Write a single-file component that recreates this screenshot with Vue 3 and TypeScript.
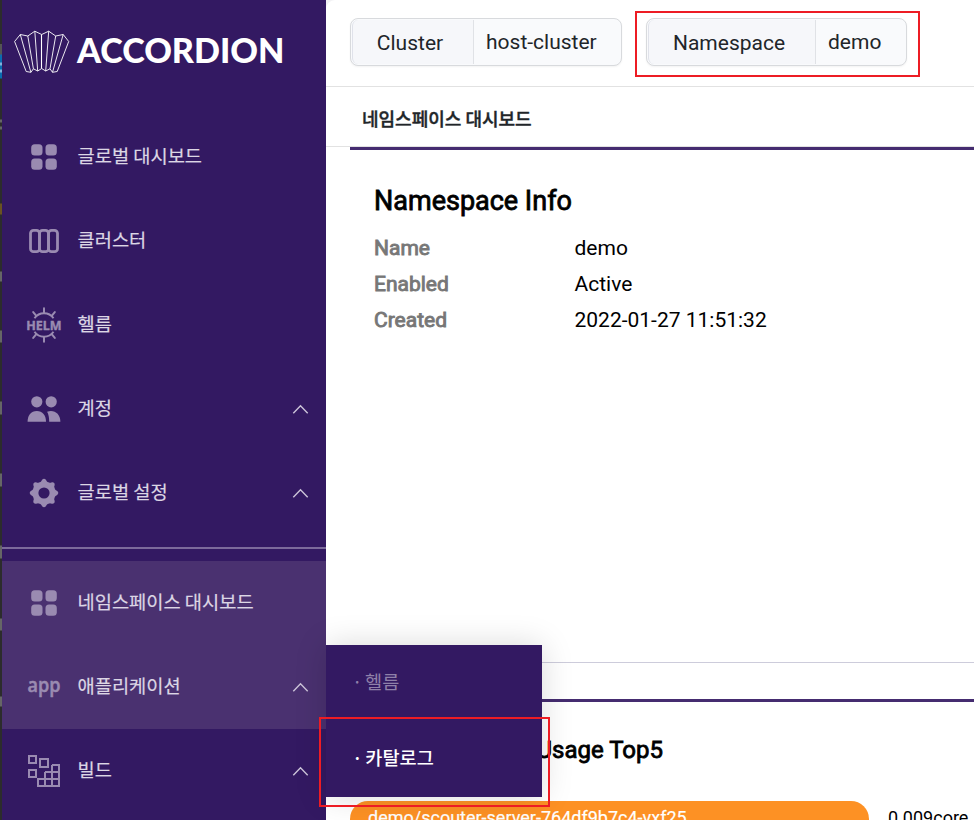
<script setup lang="ts">
interface MenuItem {
  icon: string
  label: string
  expandable?: boolean
  active?: boolean
}

const globalMenu: MenuItem[] = [
  { icon: 'grid', label: '글로벌 대시보드' },
  { icon: 'cluster', label: '클러스터' },
  { icon: 'helm', label: '헬름' },
  { icon: 'users', label: '계정', expandable: true },
  { icon: 'gear', label: '글로벌 설정', expandable: true },
]

const namespaceMenu: MenuItem[] = [
  { icon: 'grid', label: '네임스페이스 대시보드', active: true },
  { icon: 'app', label: '애플리케이션', expandable: true, active: true },
  { icon: 'build', label: '빌드', expandable: true },
]

const sections = [
  { name: 'menu-global', items: globalMenu },
  { name: 'menu-namespace', items: namespaceMenu },
]

const info = [
  { key: 'Name', value: 'demo' },
  { key: 'Enabled', value: 'Active' },
  { key: 'Created', value: '2022-01-27 11:51:32' },
]

const gearTeeth = [0, 45, 90, 135, 180, 225, 270, 315]
const helmSpokes = [0, 40, 140, 180, 220, 320]
</script>

<template>
  <div class="screen">
    <div class="edge"></div>
    <aside class="sidebar">
      <div class="brand">
        <svg class="brand-mark" width="56" height="44" viewBox="0 0 56 44">
          <g fill="none" stroke="#fff" stroke-width="0.9" stroke-linejoin="round">
            <path d="M.6 11.5 6.3 4.5 13.8 6 20.8 1.2 27.7 4.5 34.7 1.2 41.7 6 49.2 4.5 54.7 11.5 43.2 41.5 38.5 42.3 36 38.8 31.7 41 27.7 38.5 23.7 41 19.4 38.8 16.9 42.3 12.2 41.5Z" />
            <path d="M6.3 4.5 16.9 42.3M13.8 6 19.4 38.8M20.8 1.2 23.7 41M34.7 1.2 31.7 41M41.7 6 36 38.8M49.2 4.5 38.5 42.3" />
            <path d="M27.5 4.5V38.5" stroke-width="1.1" />
          </g>
        </svg>
        <svg class="brand-name" width="210" height="44" viewBox="0 0 210 44">
          <text x="0" y="31" textLength="207.5" lengthAdjust="spacingAndGlyphs">ACCORDION</text>
        </svg>
      </div>

      <nav v-for="section in sections" :key="section.name" :class="['menu', section.name]">
        <div v-for="item in section.items" :key="item.label" :class="['item', { active: item.active }]">
          <svg class="icon" width="36" height="36" viewBox="0 0 36 36">
            <g v-if="item.icon === 'grid'" fill="#9a8bb1">
              <rect x="5.2" y="5.2" width="11.3" height="11.3" rx="3.5" />
              <rect x="19.5" y="5.2" width="11.3" height="11.3" rx="3.5" />
              <rect x="5.2" y="19.5" width="11.3" height="11.3" rx="3.5" />
              <rect x="19.5" y="19.5" width="11.3" height="11.3" rx="3.5" />
            </g>
            <g v-else-if="item.icon === 'cluster'" fill="none" stroke="#9a8bb1" stroke-width="2.8">
              <rect x="4.5" y="7.3" width="9" height="21.4" rx="3" />
              <rect x="13.5" y="7.3" width="9" height="21.4" rx="3" />
              <rect x="22.5" y="7.3" width="9" height="21.4" rx="3" />
            </g>
            <g v-else-if="item.icon === 'helm'" fill="none" stroke="#9a8bb1" stroke-width="2">
              <path d="M8.5 11.3A11.5 11.5 0 0 1 27.5 11.3M8.5 24.7A11.5 11.5 0 0 0 27.5 24.7" />
              <path v-for="a in helmSpokes" :key="a" d="M18 6V1.2" stroke-linecap="round" :transform="`rotate(${a} 18 18)`" />
              <text x="0.2" y="22.7" textLength="35.4" lengthAdjust="spacingAndGlyphs" class="helm-text">HELM</text>
            </g>
            <g v-else-if="item.icon === 'users'" fill="#9a8bb1">
              <circle cx="10.8" cy="10.8" r="5.6" />
              <circle cx="25.2" cy="10.8" r="5.6" />
              <path d="M1.6 30.8C1.6 24.3 5 20 10.8 20S20 24.3 20 30.8Z" />
              <path d="M21.1 20.7C28 18.3 34.4 22.5 34.4 30.8H23.2C23.2 26.6 22.6 23.3 21.1 20.7Z" />
            </g>
            <g v-else-if="item.icon === 'gear'">
              <g fill="#9a8bb1">
                <circle cx="18" cy="18" r="11.6" />
                <path v-for="a in gearTeeth" :key="a" d="M13.8 7.5Q15.3 6.8 16.1 4.8Q18 2.6 19.9 4.8Q20.7 6.8 22.2 7.5Z" :transform="`rotate(${a} 18 18)`" />
              </g>
              <circle class="gear-hole" cx="18" cy="18" r="5.6" />
            </g>
            <text v-else-if="item.icon === 'app'" x="1.5" y="23" textLength="33" lengthAdjust="spacingAndGlyphs" class="app-text">app</text>
            <g v-else fill="none" stroke="#9a8bb1" stroke-width="2">
              <path d="M3 3H10V10H3ZM14 6H22V14H14ZM3 17H10V24H3Z" />
              <path d="M12 26H33V33H12ZM19 19H33M19 19V33M26 12H33V26M26 12V33" />
            </g>
          </svg>
          <span class="label">{{ item.label }}</span>
          <svg v-if="item.expandable" class="chevron" width="18" height="12" viewBox="0 0 18 12">
            <path d="M2.3 10.3 9.5 2.8 16.7 10.3" fill="none" stroke="#cbc3d8" stroke-width="1.4" />
          </svg>
        </div>
      </nav>
    </aside>

    <div class="backdrop">
      <main class="content">
        <header class="topbar">
          <div class="selector selector-cluster">
            <span class="selector-key">Cluster</span>
            <span class="selector-value">host-cluster</span>
          </div>
          <div class="selector selector-namespace">
            <span class="selector-key">Namespace</span>
            <span class="selector-value">demo</span>
          </div>
        </header>
        <h1 class="page-title">네임스페이스 대시보드</h1>
        <section class="card info-card">
          <h2>Namespace Info</h2>
          <dl>
            <div v-for="row in info" :key="row.key" class="info-row">
              <dt>{{ row.key }}</dt>
              <dd>{{ row.value }}</dd>
            </div>
          </dl>
        </section>
        <section class="card usage-card">
          <h3>Usage Top5</h3>
          <div class="usage-row">
            <div class="bar">demo/scouter-server-764df9b7c4-vxf25</div>
            <span>0.009core</span>
          </div>
        </section>
      </main>
    </div>

    <div class="submenu">
      <div class="subitem">· 헬름</div>
      <div class="subitem selected">· 카탈로그</div>
    </div>
    <div class="mark mark-namespace"></div>
    <div class="mark mark-catalog"></div>
  </div>
</template>

<style>
html,
body {
  margin: 0;
  overflow: hidden;
}
</style>

<style scoped>
* {
  box-sizing: border-box;
}
.screen {
  position: relative;
  display: flex;
  width: 974px;
  height: 820px;
  overflow: hidden;
  background: #fff;
  font-family: Roboto, "Noto Sans CJK KR", sans-serif;
}
.edge {
  flex: none;
  width: 2px;
  background: linear-gradient(#2c2c2c 44px, #555 44px 54px, #0a6bb0 55px 62px, #7fb2dc 63px 65px, #0a6bb0 66px 69px, #7fb2dc 70px 72px, #0a6bb0 73px 78px, #2c2c2c 79px 119px, #666 120px 122px, #2c2c2c 123px 126px, #666 127px 129px, #2c2c2c 130px 203px, #6a5321 204px 214px, #2c2c2c 215px 271px, #666 272px 281px, #2c2c2c 282px 330px, #666 331px 342px, #2c2c2c 343px 401px, #666 402px 414px, #2c2c2c 415px 473px, #666 474px 486px, #2c2c2c 487px 545px, #666 546px 558px, #2c2c2c 559px 618px, #666 619px 630px, #2c2c2c 631px 696px, #666 697px 706px, #2c2c2c 707px);
}
.sidebar {
  flex: none;
  width: 324px;
  background: #331962;
}
.brand {
  display: flex;
  height: 115px;
  padding: 30px 0 0 12px;
}
.brand-mark {
  flex: none;
}
.brand-name {
  flex: none;
  margin: 2px 0 0 7px;
  overflow: visible;
}
.brand-name text {
  font: 900 33.6px Lato, sans-serif;
  fill: #fff;
}
.menu-global {
  height: 434px;
  border-bottom: 2px solid #7c6a9b;
}
.menu-namespace {
  padding-top: 12px;
}
.item {
  display: flex;
  align-items: center;
  height: 84px;
  padding: 0 17px 0 24px;
}
.item.active {
  background: #4a3170;
}
.icon {
  flex: none;
  overflow: visible;
}
.label {
  flex: 1;
  margin: -4px 0 0 15.5px;
  color: #dcd6e4;
  font: 400 18.7px/28px "Noto Sans CJK KR", sans-serif;
  -webkit-text-stroke: 0.2px #dcd6e4;
  white-space: nowrap;
}
.helm-text {
  font: 700 12.8px "Noto Sans", sans-serif;
  fill: #9a8bb1;
  stroke: #9a8bb1;
  stroke-width: 0.4px;
}
.app-text {
  font: 600 19px "Open Sans", sans-serif;
  fill: #9a8bb1;
  stroke: #9a8bb1;
  stroke-width: 0.5px;
}
.gear-hole {
  fill: #331962;
}
.backdrop {
  flex: 1;
  min-width: 0;
  background: #f2f2f4;
}
.content {
  height: 820px;
  background: #fff;
  border-top-left-radius: 9px;
}
.topbar {
  display: flex;
  gap: 24px;
  height: 87px;
  padding: 18px 0 0 24px;
  border-bottom: 1px solid #e2e2e2;
}
.selector {
  display: flex;
  height: 48px;
  padding: 1px;
  border: 1px solid #d8dadd;
  border-radius: 8px;
  background: #f9fafc;
  box-shadow: 0 1px 2px #0000000d;
  color: #212529;
  font-size: 21px;
}
.selector-cluster {
  width: 272px;
}
.selector-namespace {
  width: 261px;
}
.selector-key {
  flex: none;
  padding-right: 6px;
  border-left: 1px solid #e0e2ea;
  border-right: 1px solid #e0e2e6;
  border-radius: 6px 0 0 6px;
  background: #f6f7fa;
  line-height: 46px;
  text-align: center;
}
.selector-cluster .selector-key {
  width: 122px;
}
.selector-namespace .selector-key {
  width: 168px;
}
.selector-value {
  padding-left: 12px;
  line-height: 44px;
}
.page-title {
  height: 60px;
  margin: 0;
  padding-left: 36px;
  border-bottom: 1px solid #e2e2e2;
  color: #212529;
  font: 500 18px/62px "Noto Sans CJK KR", sans-serif;
  -webkit-text-stroke: 0.4px #212529;
}
.card {
  margin-left: 24px;
  border-top: 3px solid #452c70;
}
.info-card {
  height: 516px;
  padding: 33px 24px 0;
  border-bottom: 1px solid #cdccdb;
}
h2,
h3 {
  margin: 0;
  color: #000;
  font-weight: 400;
  -webkit-text-stroke: 0.8px #000;
}
h2 {
  font-size: 27px;
  line-height: 36px;
}
dl {
  margin: 11px 0 0;
}
.info-row {
  display: flex;
  height: 36px;
  font-size: 21px;
  line-height: 36px;
}
dt {
  width: 200.5px;
  color: #777;
  -webkit-text-stroke: 0.9px #777;
}
dd {
  margin: 0;
  color: #000;
}
.usage-card {
  margin-top: 36px;
}
h3 {
  width: 313px;
  padding-top: 32px;
  text-align: right;
  font-size: 24px;
  line-height: 32px;
}
.usage-row {
  display: flex;
  margin-top: 35px;
  font-size: 18px;
  line-height: 34px;
}
.bar {
  width: 519px;
  height: 36px;
  padding-left: 18px;
  border-radius: 18px;
  background: #fd9124;
  color: #fff;
  -webkit-text-stroke: 0.2px #fff;
}
.usage-row span {
  margin-left: 19px;
}
.submenu {
  position: absolute;
  left: 326px;
  top: 645px;
  width: 216px;
  height: 152px;
  background: #331962;
  box-shadow: 0 0 30px #00000026;
}
.subitem {
  height: 76px;
  padding-left: 26px;
  color: #8f80a9;
  font: 400 18.6px/72px "Noto Sans CJK KR", sans-serif;
  word-spacing: -1.5px;
}
.subitem.selected {
  color: #fff;
  font-weight: 500;
}
.mark {
  position: absolute;
  border: 2px solid #ed1c24;
}
.mark-namespace {
  left: 635px;
  top: 11px;
  width: 285px;
  height: 66px;
}
.mark-catalog {
  left: 319px;
  top: 717px;
  width: 231px;
  height: 90px;
}
</style>
